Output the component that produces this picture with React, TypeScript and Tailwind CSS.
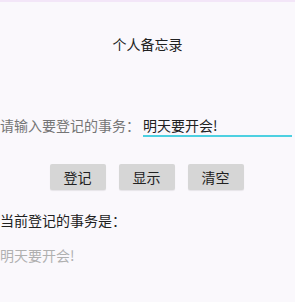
export default function App() {
  return (
    <div
      className="h-[302px] w-[295px] overflow-hidden bg-[#faf8fc] text-[14px] leading-none"
      style={{ fontFamily: '"Noto Sans CJK SC", "Noto Sans", sans-serif' }}
    >
      <div className="h-[2px] bg-[#f3e6f8]" />

      {/* Title */}
      <div className="mt-[35px] text-center text-[#212121]">个人备忘录</div>

      {/* Input row */}
      <div className="mt-[67px] flex items-end">
        <span className="pb-[5px] text-[#757575]">请输入要登记的事务：</span>
        <div className="ml-[3px] mr-[3px] flex-1 border-b-[2px] border-[#4dd0e1] pb-[3px] text-[#212121]">
          明天要开会!
        </div>
      </div>

      {/* Buttons */}
      <div className="mt-[27px] flex justify-center gap-[13px] pr-[2px]">
        <button className="h-[26px] w-[56px] rounded-[2px] bg-[#d6d6d6] text-[#212121] shadow-[0_1px_1px_rgba(0,0,0,0.08)]">
          登记
        </button>
        <button className="h-[26px] w-[56px] rounded-[2px] bg-[#d6d6d6] text-[#212121] shadow-[0_1px_1px_rgba(0,0,0,0.08)]">
          显示
        </button>
        <button className="h-[26px] w-[56px] rounded-[2px] bg-[#d6d6d6] text-[#212121] shadow-[0_1px_1px_rgba(0,0,0,0.08)]">
          清空
        </button>
      </div>

      <div className="mt-[23px] text-[#212121]">当前登记的事务是：</div>
      <div className="mt-[21px] text-[#b0b0b0]">明天要开会!</div>
    </div>
  )
}
